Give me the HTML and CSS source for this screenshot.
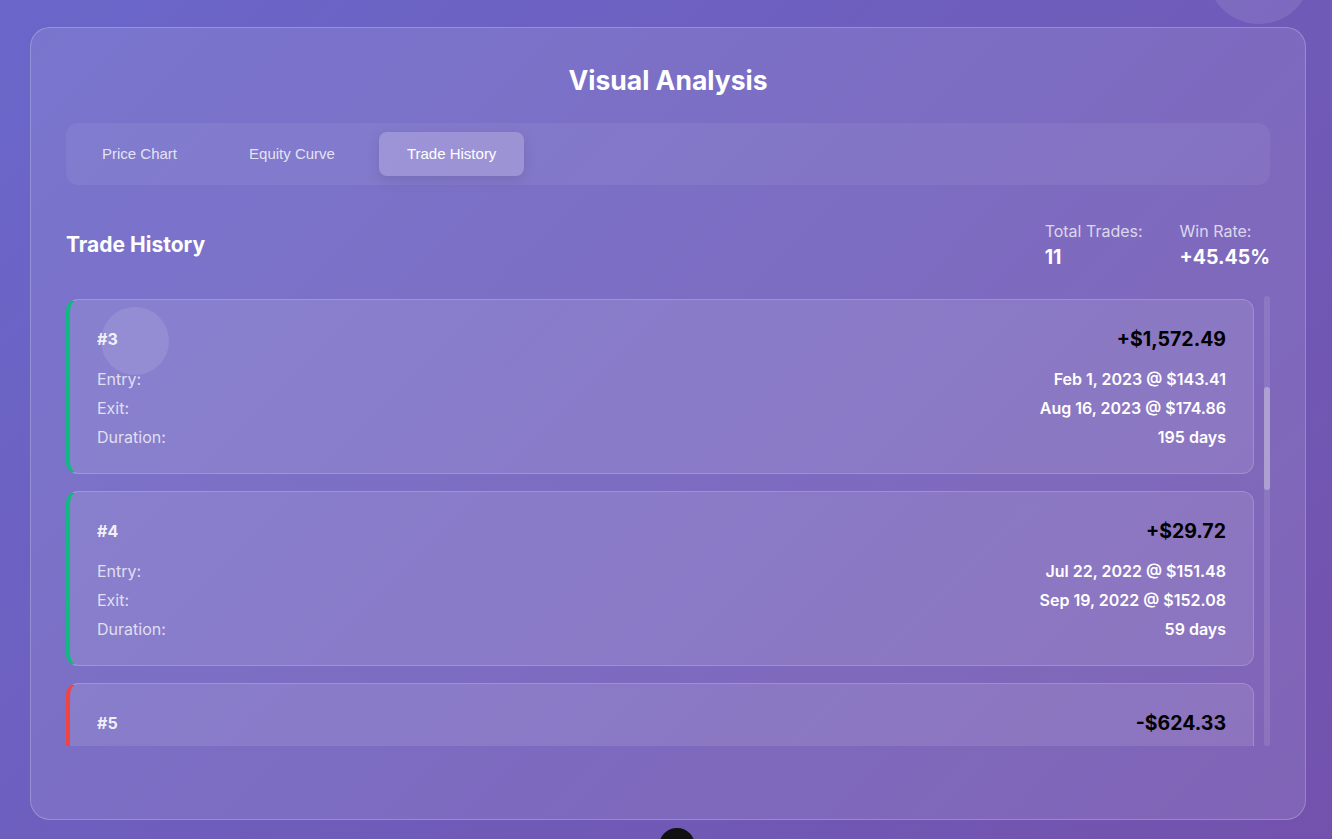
FILE: index.html
```html
<!DOCTYPE html>
<html lang="en">
<head>
<meta charset="utf-8">
<title>Visual Analysis</title>
<link rel="stylesheet" href="styles.css">
</head>
<body>
<div class="bubble bubble-top"></div>
<main class="page">
  <section class="panel">
    <h2 class="panel-title">Visual Analysis</h2>
    <nav class="tabs">
      <button class="tab">Price Chart</button>
      <button class="tab">Equity Curve</button>
      <button class="tab active">Trade History</button>
    </nav>
    <div class="history">
      <div class="history-head">
        <h3 class="history-title">Trade History</h3>
        <div class="stats">
          <div class="stat">
            <span class="stat-label">Total Trades:</span>
            <span class="stat-value">11</span>
          </div>
          <div class="stat">
            <span class="stat-label">Win Rate:</span>
            <span class="stat-value">+45.45%</span>
          </div>
        </div>
      </div>
      <div class="trade-scroller">
        <div class="trade-list" id="tradeList">
          <div class="trade win">
            <div class="trade-head"><span class="trade-id">#1</span><span class="trade-pnl">+$842.10</span></div>
            <div class="trade-row"><span class="lbl">Entry:</span><span class="val">Jan 4, 2022 @ $178.20</span></div>
            <div class="trade-row"><span class="lbl">Exit:</span><span class="val">Mar 29, 2022 @ $181.40</span></div>
            <div class="trade-row"><span class="lbl">Duration:</span><span class="val">84 days</span></div>
          </div>
          <div class="trade loss">
            <div class="trade-head"><span class="trade-id">#2</span><span class="trade-pnl">-$312.55</span></div>
            <div class="trade-row"><span class="lbl">Entry:</span><span class="val">Apr 12, 2022 @ $167.66</span></div>
            <div class="trade-row"><span class="lbl">Exit:</span><span class="val">May 20, 2022 @ $137.59</span></div>
            <div class="trade-row"><span class="lbl">Duration:</span><span class="val">38 days</span></div>
          </div>
          <div class="trade win" id="trade3">
            <div class="trade-head"><span class="trade-id">#3</span><span class="trade-pnl">+$1,572.49</span></div>
            <div class="trade-row"><span class="lbl">Entry:</span><span class="val">Feb 1, 2023 @ $143.41</span></div>
            <div class="trade-row"><span class="lbl">Exit:</span><span class="val">Aug 16, 2023 @ $174.86</span></div>
            <div class="trade-row"><span class="lbl">Duration:</span><span class="val">195 days</span></div>
          </div>
          <div class="trade win">
            <div class="trade-head"><span class="trade-id">#4</span><span class="trade-pnl">+$29.72</span></div>
            <div class="trade-row"><span class="lbl">Entry:</span><span class="val">Jul 22, 2022 @ $151.48</span></div>
            <div class="trade-row"><span class="lbl">Exit:</span><span class="val">Sep 19, 2022 @ $152.08</span></div>
            <div class="trade-row"><span class="lbl">Duration:</span><span class="val">59 days</span></div>
          </div>
          <div class="trade loss">
            <div class="trade-head"><span class="trade-id">#5</span><span class="trade-pnl">-$624.33</span></div>
            <div class="trade-row"><span class="lbl">Entry:</span><span class="val">Oct 3, 2022 @ $142.45</span></div>
            <div class="trade-row"><span class="lbl">Exit:</span><span class="val">Nov 8, 2022 @ $139.50</span></div>
            <div class="trade-row"><span class="lbl">Duration:</span><span class="val">36 days</span></div>
          </div>
          <div class="trade win">
            <div class="trade-head"><span class="trade-id">#6</span><span class="trade-pnl">+$410.02</span></div>
            <div class="trade-row"><span class="lbl">Entry:</span><span class="val">Dec 1, 2022 @ $148.31</span></div>
            <div class="trade-row"><span class="lbl">Exit:</span><span class="val">Jan 12, 2023 @ $133.41</span></div>
            <div class="trade-row"><span class="lbl">Duration:</span><span class="val">42 days</span></div>
          </div>
          <div class="trade loss">
            <div class="trade-head"><span class="trade-id">#7</span><span class="trade-pnl">-$188.40</span></div>
            <div class="trade-row"><span class="lbl">Entry:</span><span class="val">Sep 1, 2023 @ $189.46</span></div>
            <div class="trade-row"><span class="lbl">Exit:</span><span class="val">Oct 2, 2023 @ $173.75</span></div>
            <div class="trade-row"><span class="lbl">Duration:</span><span class="val">31 days</span></div>
          </div>
          <div class="trade win">
            <div class="trade-head"><span class="trade-id">#8</span><span class="trade-pnl">+$655.18</span></div>
            <div class="trade-row"><span class="lbl">Entry:</span><span class="val">Nov 1, 2023 @ $173.97</span></div>
            <div class="trade-row"><span class="lbl">Exit:</span><span class="val">Dec 28, 2023 @ $193.58</span></div>
            <div class="trade-row"><span class="lbl">Duration:</span><span class="val">57 days</span></div>
          </div>
          <div class="trade loss">
            <div class="trade-head"><span class="trade-id">#9</span><span class="trade-pnl">-$402.77</span></div>
            <div class="trade-row"><span class="lbl">Entry:</span><span class="val">Jan 10, 2024 @ $186.19</span></div>
            <div class="trade-row"><span class="lbl">Exit:</span><span class="val">Feb 20, 2024 @ $181.56</span></div>
            <div class="trade-row"><span class="lbl">Duration:</span><span class="val">41 days</span></div>
          </div>
          <div class="trade loss">
            <div class="trade-head"><span class="trade-id">#10</span><span class="trade-pnl">-$95.60</span></div>
            <div class="trade-row"><span class="lbl">Entry:</span><span class="val">Mar 5, 2024 @ $170.12</span></div>
            <div class="trade-row"><span class="lbl">Exit:</span><span class="val">Apr 2, 2024 @ $168.84</span></div>
            <div class="trade-row"><span class="lbl">Duration:</span><span class="val">28 days</span></div>
          </div>
          <div class="trade loss">
            <div class="trade-head"><span class="trade-id">#11</span><span class="trade-pnl">-$51.20</span></div>
            <div class="trade-row"><span class="lbl">Entry:</span><span class="val">May 1, 2024 @ $169.30</span></div>
            <div class="trade-row"><span class="lbl">Exit:</span><span class="val">May 24, 2024 @ $189.98</span></div>
            <div class="trade-row"><span class="lbl">Duration:</span><span class="val">23 days</span></div>
          </div>
        </div>
        <div class="scroll-track"><div class="scroll-thumb"></div></div>
      </div>
    </div>
    <div class="bubble bubble-card"></div>
  </section>
</main>
<div class="fab"></div>
<script src="script.js"></script>
</body>
</html>
```

FILE: styles.css
```css
* { box-sizing: border-box; }

html, body { height: 100%; }

body {
  margin: 0;
  overflow: hidden;
  font-family: Inter, "Noto Sans", sans-serif;
  color: #fff;
  background: linear-gradient(135deg, #6a67ca 0%, #7352ad 100%);
  position: relative;
}

.page {
  padding: 27px 26px 0 30px;
}

.panel {
  position: relative;
  height: 793px;
  background: rgba(255, 255, 255, 0.1);
  border: 1px solid rgba(255, 255, 255, 0.22);
  border-radius: 20px;
  padding: 36px 35px 0 35px;
  overflow: hidden;
}

.panel-title {
  margin: 0 0 27px;
  text-align: center;
  font-size: 26.5px;
  line-height: 32px;
  font-weight: 700;
}

.tabs {
  display: flex;
  gap: 16px;
  padding: 9px 8px;
  background: rgba(255, 255, 255, 0.06);
  border-radius: 12px;
}

.tab {
  border: 0;
  background: transparent;
  color: rgba(255, 255, 255, 0.8);
  font-family: "Liberation Sans", Arial, sans-serif;
  font-size: 15px;
  line-height: 18px;
  height: 44px;
  padding: 0 28px;
  border-radius: 8px;
}

.tab.active {
  background: rgba(255, 255, 255, 0.2);
  color: #fff;
  box-shadow: 0 4px 14px rgba(0, 0, 0, 0.1);
}

.history {
  margin-top: 37px;
}

.history-head {
  display: flex;
  justify-content: space-between;
  align-items: flex-start;
  margin-bottom: 22px;
}

.history-title {
  margin: 10px 0 0;
  font-size: 21px;
  line-height: 26px;
  font-weight: 700;
}

.stats {
  display: flex;
  gap: 37px;
}

.stat {
  display: flex;
  flex-direction: column;
}

.stat-label {
  font-size: 16px;
  line-height: 18px;
  color: rgba(255, 255, 255, 0.74);
}

.stat-value {
  font-size: 19.5px;
  line-height: 34px;
  font-weight: 700;
}

.trade-scroller {
  display: flex;
  gap: 10px;
  height: 450px;
}

.trade-list {
  flex: 1;
  overflow: hidden;
  display: flex;
  flex-direction: column;
  gap: 17px;
}

.scroll-track {
  flex: none;
  width: 6px;
  background: rgba(255, 255, 255, 0.1);
  border-radius: 3px;
}

.scroll-thumb {
  margin-top: 91px;
  height: 103px;
  background: rgba(255, 255, 255, 0.3);
  border-radius: 3px;
}

.trade {
  flex: none;
  background: rgba(255, 255, 255, 0.1);
  border: 1px solid rgba(255, 255, 255, 0.18);
  border-left: 4px solid #10b981;
  border-radius: 12px;
  padding: 25px 27px 25px 27px;
}

.trade.loss { border-left-color: #ef4444; }

.trade-head {
  display: flex;
  justify-content: space-between;
  align-items: center;
  height: 28px;
  margin-bottom: 16px;
}

.trade-id {
  font-size: 16px;
  font-weight: 700;
  color: rgba(255, 255, 255, 0.9);
}

.trade-pnl {
  font-size: 19.5px;
  font-weight: 700;
  color: #000;
}

.trade-row {
  display: flex;
  justify-content: space-between;
  font-size: 16px;
  line-height: 21px;
  margin-bottom: 8px;
}

.trade-row:last-child { margin-bottom: 0; }

.lbl { color: rgba(255, 255, 255, 0.76); }

.val { font-weight: 600; color: #fff; }

.bubble {
  position: absolute;
  border-radius: 50%;
  background: rgba(255, 255, 255, 0.1);
  pointer-events: none;
}

.bubble-top {
  width: 104px;
  height: 104px;
  left: 1207px;
  top: -80px;
}

.bubble-card {
  width: 68px;
  height: 68px;
  left: 70px;
  top: 279px;
}

.fab {
  position: absolute;
  width: 36px;
  height: 36px;
  border-radius: 50%;
  background: #111;
  left: 659px;
  top: 828px;
}
```

FILE: script.js
```js
(function () {
  var list = document.getElementById('tradeList');
  var t3 = document.getElementById('trade3');
  list.scrollTop = t3.offsetTop - list.offsetTop - 3;
})();
```
